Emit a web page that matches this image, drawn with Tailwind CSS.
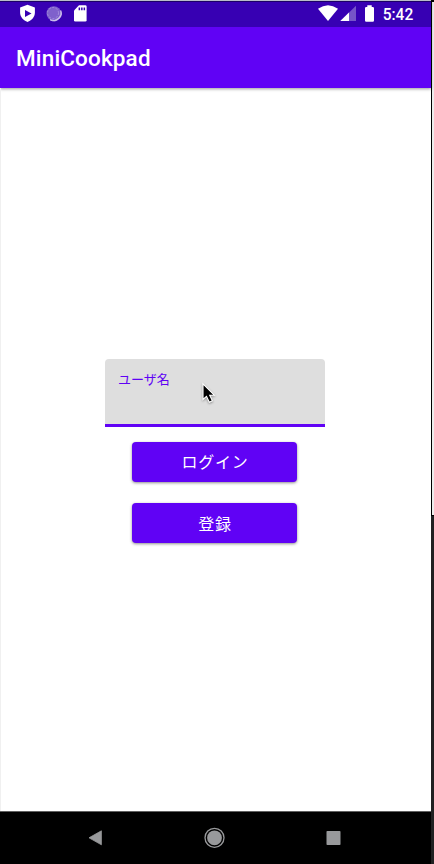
<!DOCTYPE html>
<html lang="ja">
<head>
<meta charset="utf-8">
<title>MiniCookpad</title>
<script src="https://cdn.jsdelivr.net/npm/@tailwindcss/browser@4"></script>
</head>
<body class="w-[434px] h-[864px] overflow-hidden flex bg-white font-[Roboto,'Noto_Sans_CJK_JP',sans-serif]">
<div class="w-[431px] h-full flex flex-col shrink-0 relative">
  <header class="shadow-[0_1px_3px_rgba(0,0,0,0.4)]">
    <div class="h-[27px] bg-[#3700b3] border-t border-[#b9bdc9] text-white">
      <div class="h-[26px] border-t border-[#1d0068] flex items-start">
        <svg class="w-[431px] h-[25px] shrink-0" viewBox="0 2 431 25" fill="white">
          <path d="M27.500 4.800L34.900 7.600V12.500C34.900 17 31.500 20.500 27.500 22C23.500 20.500 20.100 17 20.100 12.500V7.600Z"/>
          <path d="M25 10L31.500 13.500L25 17Z" fill="#3700b3"/>
          <circle cx="53.800" cy="13.500" r="7.300" fill="#7f61cc"/>
          <path d="M60.800 10.500A7.500 7.500 0 0 1 50 19.800A8 8 0 0 0 60.800 10.500" fill="#dcd4f1" stroke="#dcd4f1" stroke-width="0.700"/>
          <circle cx="53" cy="13" r="5.500" fill="none" stroke="#a48edc" stroke-width="1" stroke-dasharray="2 1.500"/>
          <path d="M79 5.300H85.300Q86.600 5.300 86.600 6.600V20.200Q86.600 21.500 85.300 21.500H75.300Q74 21.500 74 20.200V10.500Z"/>
          <path d="M78.600 7.500h1.500v2.700h-1.500zM81.100 7.500h1.500v2.700h-1.500zM83.600 7.500h1.500v2.700h-1.500z" fill="#3700b3"/>
          <path d="M318 8.700Q328 1.600 338 8.700L328 21Z"/>
          <path d="M356 5.800V21H340.300Z" fill="#7654c8"/>
          <path d="M349 12.500V21H340.300Z"/>
          <path d="M367.300 5.200H371.700V7H372.800Q374 7 374 8.200V20.500Q374 21.700 372.800 21.700H366.200Q365 21.700 365 20.500V8.200Q365 7 366.200 7H367.300Z"/>
          <text x="382.700" y="19.600" font-size="16.300" font-weight="500" textLength="30.500" lengthAdjust="spacingAndGlyphs">5:42</text>
        </svg>
      </div>
    </div>
    <h1 class="h-[61px] bg-[#6002f5] text-white flex items-center pl-4 text-[22.500px] font-medium tracking-[0.150px] pt-[2px]">MiniCookpad</h1>
  </header>
  <main class="flex-1 flex flex-col items-center pt-[271px] pr-[3px] border-l border-[#f0f0f0]">
    <label class="w-[220px] h-[68px] bg-[#dedede] rounded-t-[4px] border-b-[3px] border-[#6002f5] pl-[13.500px] pt-[11px] text-[13px] leading-[20px] text-[#6002f5]">ユーザ名</label>
    <button class="mt-[15px] w-[165px] h-[40px] rounded-[4px] bg-[#6002f5] text-white text-[16px] tracking-[0.8px] pl-[1px] pt-[2px] shadow-[0_1px_3px_rgba(0,0,0,0.45)]">ログイン</button>
    <button class="mt-[21.300px] w-[165px] h-[40px] rounded-[4px] bg-[#6002f5] text-white text-[16px] tracking-[0.8px] pl-[1px] pt-[3px] shadow-[0_1px_3px_rgba(0,0,0,0.45)]">登録</button>
  </main>
  <nav class="h-[53px] bg-black border-t border-[#606060]">
    <svg class="w-[431px] h-[52px]" viewBox="0 812 431 52" fill="#98999b">
      <path d="M89 837.800L101.400 830.800V844.800Z" stroke="#98999b" stroke-width="0.800" stroke-linejoin="round"/>
      <circle cx="214.500" cy="837.800" r="7.400"/>
      <circle cx="214.500" cy="837.800" r="9.500" fill="none" stroke="#98999b" stroke-width="1.300"/>
      <rect x="326.500" y="831" width="14" height="14" rx="0.800"/>
    </svg>
  </nav>
  <svg class="absolute left-[200px] top-[382px] w-[20px] h-[24px] drop-shadow-[0_1px_1px_rgba(0,0,0,0.35)]" viewBox="200 382 20 24">
    <path d="M203 383.800V399.500L206.500 396.300L209.300 402.200L212.400 400.700L209.700 395.200H214.300Z" fill="black" stroke="white" stroke-width="1.100"/>
  </svg>
</div>
<div class="w-[3px] h-full flex flex-col">
  <div class="h-[516px] border-t-2 border-l border-b border-black bg-[#ededed]"></div>
  <div class="flex-1 bg-[#202122]"></div>
</div>
</body>
</html>
